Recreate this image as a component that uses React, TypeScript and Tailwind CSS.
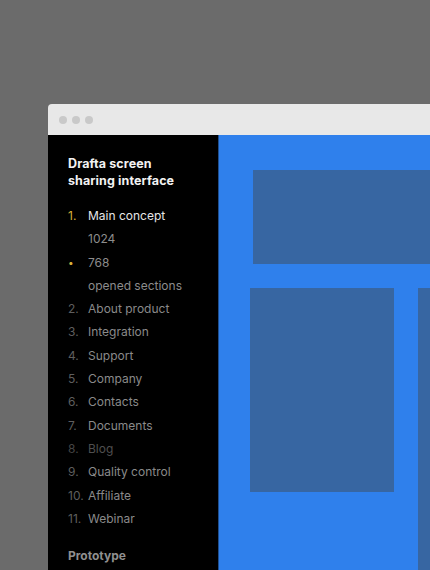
import React from 'react';

type Item = { num: string; label: string; tone: 'active' | 'sub' | 'normal' | 'dim'; bullet?: boolean };

const ITEMS: Item[] = [
  { num: '1.', label: 'Main concept', tone: 'active' },
  { num: '', label: '1024', tone: 'sub' },
  { num: '•', label: '768', tone: 'sub', bullet: true },
  { num: '', label: 'opened sections', tone: 'sub' },
  { num: '2.', label: 'About product', tone: 'normal' },
  { num: '3.', label: 'Integration', tone: 'normal' },
  { num: '4.', label: 'Support', tone: 'normal' },
  { num: '5.', label: 'Company', tone: 'normal' },
  { num: '6.', label: 'Contacts', tone: 'normal' },
  { num: '7.', label: 'Documents', tone: 'normal' },
  { num: '8.', label: 'Blog', tone: 'dim' },
  { num: '9.', label: 'Quality control', tone: 'normal' },
  { num: '10.', label: 'Affiliate', tone: 'normal' },
  { num: '11.', label: 'Webinar', tone: 'normal' },
];

const labelColor = (tone: Item['tone']) => {
  if (tone === 'active') return 'text-[#e6e6e6]';
  if (tone === 'sub') return 'text-[#8c8c8c]';
  if (tone === 'dim') return 'text-[#4f4f4f]';
  return 'text-[#8a8a8a]';
};

const numColor = (item: Item) => {
  if (item.tone === 'active' || item.bullet) return 'text-[#d8b13a]';
  if (item.tone === 'dim') return 'text-[#444444]';
  return 'text-[#5e5e5e]';
};

export default function App() {
  return (
    <div
      className="w-[430px] h-[570px] overflow-hidden bg-[#6b6b6b] pt-[104px] pl-[48px]"
      style={{ fontFamily: 'Inter, "Noto Sans", sans-serif' }}
    >
      <div className="w-[420px] h-[480px] rounded-tl-[4px] overflow-hidden flex flex-col">
        {/* Title bar */}
        <div className="h-[31px] shrink-0 bg-[#e8e8e8] flex items-center gap-[5px] pl-[11px]">
          <span className="w-[8px] h-[8px] shrink-0 rounded-full bg-[#c9c9c9]" />
          <span className="w-[8px] h-[8px] shrink-0 rounded-full bg-[#c9c9c9]" />
          <span className="w-[8px] h-[8px] shrink-0 rounded-full bg-[#c9c9c9]" />
        </div>

        <div className="flex flex-1 min-h-0">
          {/* Sidebar */}
          <div className="w-[170px] shrink-0 bg-black pl-[20px] pt-[20px]">
            <h1 className="text-[12.5px] leading-[17px] font-bold text-[#f2f2f2] tracking-[0.1px]">
              Drafta screen
              <br />
              sharing interface
            </h1>
            <ul className="mt-[15px]">
              {ITEMS.map((item, i) => (
                <li key={i} className="flex text-[12px] leading-[23.3px] whitespace-nowrap">
                  <span className={`w-[20px] shrink-0 ${numColor(item)} ${item.bullet ? 'text-[10px]' : ''}`}>
                    {item.num}
                  </span>
                  <span className={labelColor(item.tone)}>{item.label}</span>
                </li>
              ))}
            </ul>
            <div className="mt-[17px] text-[12px] leading-[17px] font-bold text-[#8f8f8f]">Prototype</div>
          </div>

          {/* Canvas */}
          <div className="flex-1 min-w-0 bg-[#2f80ec] border-l border-[#1f4f8f] pt-[35px] pl-[31px]">
            <div className="ml-[3px] h-[94px] bg-[#3766a2]" />
            <div className="flex gap-[24px] mt-[24px]">
              <div className="w-[144px] h-[204px] shrink-0 bg-[#3766a2]" />
              <div className="w-[60px] h-[300px] shrink-0 bg-[#3766a2]" />
            </div>
          </div>
        </div>
      </div>
    </div>
  );
}
